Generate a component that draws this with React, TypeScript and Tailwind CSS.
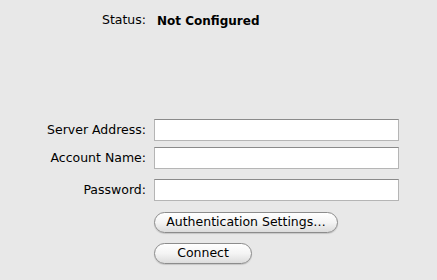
import React from 'react';

const Field: React.FC<{ label: string; className?: string }> = ({ label, className }) => (
  <div className={`flex items-center ${className ?? ''}`}>
    <label className="w-[147px] text-right pr-px text-black">{label}</label>
    <input
      type="text"
      className="ml-[7px] h-[22px] w-[245px] bg-white border border-[#b5b5b5] border-t-[#8a8a8a] outline-none"
    />
  </div>
);

const PillButton: React.FC<{ children: React.ReactNode; className?: string }> = ({ children, className }) => (
  <button
    className={`h-[21px] rounded-full border border-[#8c8c8c] bg-gradient-to-b from-white via-[#f4f4f4] to-[#dcdcdc] text-black leading-none shadow-[0_1px_1px_rgba(0,0,0,0.15)] ${className ?? ''}`}
  >
    {children}
  </button>
);

export default function App() {
  return (
    <div className="w-[437px] h-[280px] bg-[#e8e8e8] text-[12.5px] text-black font-['Lucida_Grande','DejaVu_Sans',sans-serif] overflow-hidden">
      <div className="flex items-center pt-[13px] h-[28px]">
        <span className="w-[146px] text-right">Status:</span>
        <span className="ml-[11px] font-bold text-[12px]">Not Configured</span>
      </div>

      <div className="mt-[91px] flex flex-col">
        <Field label="Server Address:" />
        <Field label="Account Name:" className="mt-[6px]" />
        <Field label="Password:" className="mt-[10px]" />
      </div>

      <div className="ml-[154px] mt-[11px] flex flex-col items-start gap-[10px]">
        <PillButton className="w-[184px]">Authentication Settings…</PillButton>
        <PillButton className="w-[98px]">Connect</PillButton>
      </div>
    </div>
  );
}
